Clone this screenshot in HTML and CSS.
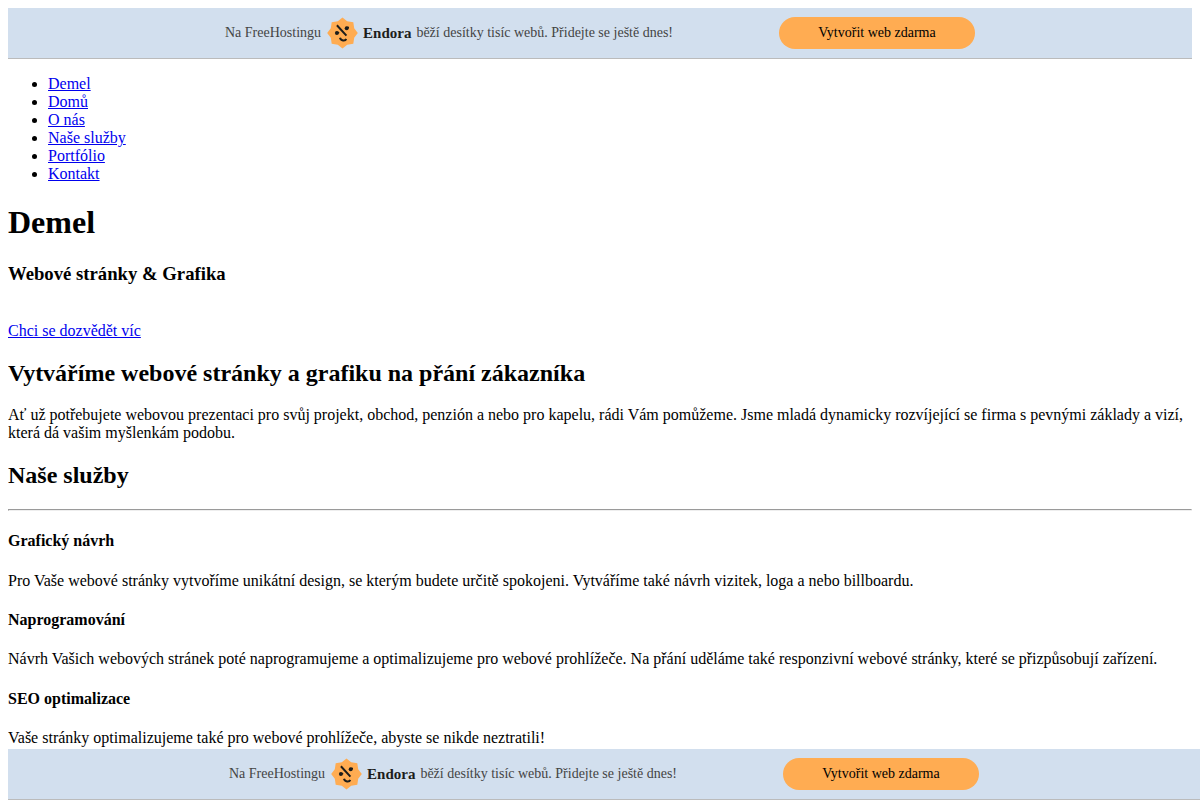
FILE: index.html
```html
<!DOCTYPE html>
<html lang="cs">
<head>
    <meta charset="UTF-8">
    <meta name="viewport" content="width=device-width, initial-scale=1.0">
    <title>Demel</title>
    <link rel="stylesheet" href="styles.css">
</head>
<body>
    <div class="banner">
        <div class="banner-content">
            <div class="banner-text">
                <span>Na FreeHostingu</span>
                <a class="endora" href="#">
                    <svg class="endora-logo" viewBox="0 0 32 32" aria-hidden="true">
                        <path fill="#ffac52" d="M16.5 .6 21.2 4.2 27.3 5.2 28.2 11.2 31.8 16 28.2 20.8 27.3 26.8 21.2 27.8 16.5 31.4 11.8 27.8 5.7 26.8 4.8 20.8 1.2 16 4.8 11.2 5.7 5.2 11.8 4.2Z" />
                        <path fill="none" stroke="#1d1d1b" stroke-width="2" d="M10.9 8.3 20.4 18.6M14 20.8C14.6 23.8 19.4 24.5 20.2 21.9" />
                        <circle fill="#1d1d1b" cx="20.7" cy="11.2" r="2" />
                        <circle fill="#1d1d1b" cx="10.9" cy="15.9" r="2" />
                        <path fill="none" stroke="#1d1d1b" stroke-width="1.4" d="M20.7 10.4 23 10.4M10.9 15.4 13.2 15.8" />
                    </svg>
                    <b>Endora</b>
                </a>
                <span>běží desítky tisíc webů. Přidejte se ještě dnes!</span>
            </div>
            <a class="banner-button" href="#">Vytvořit web zdarma</a>
        </div>
    </div>

    <nav>
        <ul>
            <li><a href="#">Demel</a></li>
            <li><a href="#">Domů</a></li>
            <li><a href="#about">O nás</a></li>
            <li><a href="#services">Naše služby</a></li>
            <li><a href="#portfolio">Portfólio</a></li>
            <li><a href="#contact">Kontakt</a></li>
        </ul>
    </nav>

    <header>
        <h1>Demel</h1>
        <h3>Webové stránky &amp; Grafika</h3>
        <br>
        <a href="#about">Chci se dozvědět víc</a>
    </header>

    <section id="about">
        <h2>Vytváříme webové stránky a grafiku na přání zákazníka</h2>
        <p>Ať už potřebujete webovou prezentaci pro svůj projekt, obchod, penzión a nebo pro kapelu, rádi Vám pomůžeme. Jsme mladá dynamicky rozvíjející se firma s pevnými základy a vizí, která dá vašim myšlenkám podobu.</p>
    </section>

    <section id="services">
        <h2>Naše služby</h2>
        <hr>
        <h4>Grafický návrh</h4>
        <p>Pro Vaše webové stránky vytvoříme unikátní design, se kterým budete určitě spokojeni. Vytváříme také návrh vizitek, loga a nebo billboardu.</p>
        <h4>Naprogramování</h4>
        <p>Návrh Vašich webových stránek poté naprogramujeme a optimalizujeme pro webové prohlížeče. Na přání uděláme také responzivní webové stránky, které se přizpůsobují zařízení.</p>
        <h4>SEO optimalizace</h4>
        <p>Vaše stránky optimalizujeme také pro webové prohlížeče, abyste se nikde neztratili!</p>
    </section>

    <div class="banner banner-fixed">
        <div class="banner-content">
            <div class="banner-text">
                <span>Na FreeHostingu</span>
                <a class="endora" href="#">
                    <svg class="endora-logo" viewBox="0 0 32 32" aria-hidden="true">
                        <path fill="#ffac52" d="M16.5 .6 21.2 4.2 27.3 5.2 28.2 11.2 31.8 16 28.2 20.8 27.3 26.8 21.2 27.8 16.5 31.4 11.8 27.8 5.7 26.8 4.8 20.8 1.2 16 4.8 11.2 5.7 5.2 11.8 4.2Z" />
                        <path fill="none" stroke="#1d1d1b" stroke-width="2" d="M10.9 8.3 20.4 18.6M14 20.8C14.6 23.8 19.4 24.5 20.2 21.9" />
                        <circle fill="#1d1d1b" cx="20.7" cy="11.2" r="2" />
                        <circle fill="#1d1d1b" cx="10.9" cy="15.9" r="2" />
                        <path fill="none" stroke="#1d1d1b" stroke-width="1.4" d="M20.7 10.4 23 10.4M10.9 15.4 13.2 15.8" />
                    </svg>
                    <b>Endora</b>
                </a>
                <span>běží desítky tisíc webů. Přidejte se ještě dnes!</span>
            </div>
            <a class="banner-button" href="#">Vytvořit web zdarma</a>
        </div>
    </div>
</body>
</html>
```
FILE: styles.css
```css
body {
    font-family: "Liberation Serif", "Times New Roman", serif;
}
.banner {
    padding: 9px 0;
    background: #d2dfee;
    border-bottom: 1px solid #bbb;
    font-size: 14px;
    line-height: 16px;
    color: #444;
}
.banner-fixed {
    position: fixed;
    left: 8px;
    right: 0;
    bottom: 0;
}
.banner-content {
    display: flex;
    align-items: center;
    justify-content: space-between;
    max-width: 750px;
    margin: 0 auto;
}
.banner-text {
    display: flex;
    align-items: center;
    gap: 5px;
}
.endora {
    display: flex;
    align-items: center;
    gap: 5px;
    font-size: 15px;
    color: #1d1d1b;
    text-decoration: none;
}
.endora-logo {
    width: 32px;
    height: 32px;
}
.banner-button {
    box-sizing: border-box;
    width: 196px;
    padding: 8px;
    border-radius: 16px;
    background: #ffac52;
    color: #000;
    text-align: center;
    text-decoration: none;
}
```
